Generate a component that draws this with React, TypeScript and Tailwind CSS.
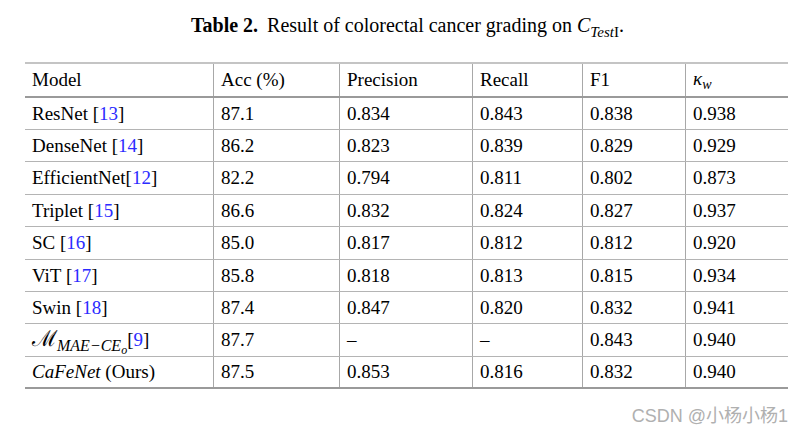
import React from 'react';

type Row = {
    name: React.ReactNode;
    acc: string;
    precision: string;
    recall: string;
    f1: string;
    kappa: string;
    h: string;
};

const Ref = ({ n }: { n: number }) => (
    <span>[<span className="text-[#2b2bff]">{n}</span>]</span>
);

const ROWS: Row[] = [
    { name: <>ResNet <Ref n={13} /></>, acc: '87.1', precision: '0.834', recall: '0.843', f1: '0.838', kappa: '0.938', h: 'h-[32px]' },
    { name: <>DenseNet <Ref n={14} /></>, acc: '86.2', precision: '0.823', recall: '0.839', f1: '0.829', kappa: '0.929', h: 'h-[32px]' },
    { name: <>EfficientNet<Ref n={12} /></>, acc: '82.2', precision: '0.794', recall: '0.811', f1: '0.802', kappa: '0.873', h: 'h-[33px]' },
    { name: <>Triplet <Ref n={15} /></>, acc: '86.6', precision: '0.832', recall: '0.824', f1: '0.827', kappa: '0.937', h: 'h-[32px]' },
    { name: <>SC <Ref n={16} /></>, acc: '85.0', precision: '0.817', recall: '0.812', f1: '0.812', kappa: '0.920', h: 'h-[33px]' },
    { name: <>ViT <Ref n={17} /></>, acc: '85.8', precision: '0.818', recall: '0.813', f1: '0.815', kappa: '0.934', h: 'h-[32px]' },
    { name: <>Swin <Ref n={18} /></>, acc: '87.4', precision: '0.847', recall: '0.820', f1: '0.832', kappa: '0.941', h: 'h-[32px]' },
    {
        name: (
            <>
                <span className="font-['DejaVu_Serif',serif] text-[22px]">ℳ</span>
                <span className="relative top-[5px] text-[16px] italic">
                    MAE−CE<span className="relative top-[3px] text-[12px]">o</span>
                </span>
                <Ref n={9} />
            </>
        ),
        acc: '87.7', precision: '–', recall: '–', f1: '0.843', kappa: '0.940', h: 'h-[33px]'
    },
    { name: <><span className="italic">CaFeNet</span> (Ours)</>, acc: '87.5', precision: '0.853', recall: '0.816', f1: '0.832', kappa: '0.940', h: 'h-[32px]' },
];

const GRID = 'grid grid-cols-[188px_126px_133px_110px_103px_103px]';
const CELL = 'flex items-center pl-[7px] border-l border-[#a8a8a8]';

export default function App() {
    return (
        <div className="w-[803px] h-[434px] bg-white text-black font-['Liberation_Serif',serif] overflow-hidden">
            <div className="h-[62px] pt-[13px] text-center text-[20px] leading-[24px] pl-[12px]">
                <span className="font-bold">Table 2.</span>
                <span className="ml-[9px]">Result of colorectal cancer grading on </span>
                <span className="italic">C</span>
                <span className="relative top-[5px] text-[15px]"><span className="italic">Test</span>I</span>
                <span>.</span>
            </div>

            <div className="ml-[25px] w-[763px] text-[19px] leading-[24px]">
                <div className={`${GRID} h-[36px] border-t-2 border-b-2 border-t-[#c4c4c4] border-b-[#9a9a9a]`}>
                    <div className="flex items-center pl-[7px]">Model</div>
                    <div className={CELL}>Acc (%)</div>
                    <div className={CELL}>Precision</div>
                    <div className={CELL}>Recall</div>
                    <div className={CELL}>F1</div>
                    <div className={CELL}>
                        <span>
                            <span className="italic">κ</span>
                            <span className="relative top-[4px] text-[14px] italic">w</span>
                        </span>
                    </div>
                </div>
                {ROWS.map((r, i) => (
                    <div
                        key={i}
                        className={`${GRID} ${r.h} ${i === ROWS.length - 1 ? 'border-b-2 border-[#9a9a9a]' : 'border-b border-[#b4b4b4]'}`}
                    >
                        <div className="flex items-center pl-[7px] whitespace-nowrap">
                            <span>{r.name}</span>
                        </div>
                        <div className={CELL}>{r.acc}</div>
                        <div className={CELL}>{r.precision}</div>
                        <div className={CELL}>{r.recall}</div>
                        <div className={CELL}>{r.f1}</div>
                        <div className={CELL}>{r.kappa}</div>
                    </div>
                ))}
            </div>

            <div className="flex justify-end pr-[15px] pt-[17px]">
                <span className="text-[18px] leading-[20px] text-[#b0b0b0] font-['Liberation_Sans','Noto_Sans_CJK_SC',sans-serif]">
                    CSDN @小杨小杨1
                </span>
            </div>
        </div>
    );
}
